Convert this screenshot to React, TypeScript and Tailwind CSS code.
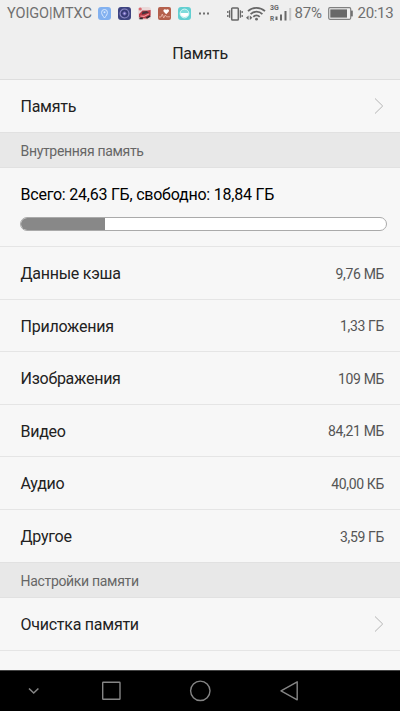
const categories = [
  { name: "Данные кэша", size: "9,76 МБ" },
  { name: "Приложения", size: "1,33 ГБ" },
  { name: "Изображения", size: "109 МБ" },
  { name: "Видео", size: "84,21 МБ" },
  { name: "Аудио", size: "40,00 КБ" },
  { name: "Другое", size: "3,59 ГБ" },
];

const USED_PERCENT = 23;

function NotificationIcons() {
  return (
    <div className="ml-[5.5px] flex items-center gap-[7px]">
      <svg width="13" height="13" viewBox="0 0 13 13">
        <rect width="13" height="13" rx="3" fill="#82b1f0" />
        <path d="M6.5 11C4.8 8.7 3.6 7.3 3.6 5.4a2.9 2.9 0 0 1 5.8 0C9.4 7.3 8.2 8.7 6.5 11Z" fill="none" stroke="#d9e9ff" strokeWidth="1" />
        <circle cx="6.5" cy="5.3" r="1" fill="#d9e9ff" />
      </svg>
      <svg width="13" height="13" viewBox="0 0 13 13">
        <rect width="13" height="13" rx="3" fill="#3d4380" />
        <circle cx="6.5" cy="6.5" r="4.5" fill="none" stroke="#8f8ac6" strokeWidth="1.1" />
        <circle cx="6.5" cy="6.5" r="2.7" fill="#625cae" stroke="#2b2f62" strokeWidth="1" />
        <circle cx="6.5" cy="6.5" r="1" fill="#bfb7e8" />
      </svg>
      <svg width="13" height="13" viewBox="0 0 13 13">
        <rect width="13" height="13" rx="3" fill="#ead9d9" />
        <circle cx="2.2" cy="2" r="1.6" fill="#dc6870" />
        <path d="M1 7 4.5 3.5h4.8L12.6 3v5.4L9.5 11.4H4L1 10Z" fill="#b93a46" />
        <path d="M4.4 4.8 8.8 4l2.2 1.8-7 1.7Z" fill="#4a333b" />
        <path d="m2.4 9 3.6.4 4.8-2.4" stroke="#f59a9e" strokeWidth="1.1" fill="none" />
        <path d="M1.4 11.4h3.4M8.4 11l3.8-2" stroke="#332b30" strokeWidth="1.8" />
      </svg>
      <svg width="13" height="13" viewBox="0 0 13 13">
        <rect width="13" height="13" rx="2" fill="#b4604c" />
        <path d="M8.2 7.2 5.8 4.8C4.4 3 6.8 1.2 8.2 2.8c1.4-1.6 3.8.2 2.4 2Z" fill="#fff" />
        <path d="M1 10h2l1.3-3 1.4 4 1.6-3 1.2 1.8H12" fill="none" stroke="#edbcae" strokeWidth=".8" />
      </svg>
      <svg width="13" height="13" viewBox="0 0 13 13">
        <rect width="13" height="13" rx="3" fill="#62cfd1" />
        <circle cx="6.5" cy="6.5" r="4.4" fill="#7edbdb" stroke="#d5f6f5" strokeWidth="1" />
        <path d="M2.4 6h8.2a4.1 4.1 0 0 1-8.2 0Z" fill="#fff" />
      </svg>
      <svg width="12" height="13" viewBox="0 0 12 13" fill="#707070">
        <rect x="1" y="5.5" width="2" height="2" />
        <rect x="5" y="5.5" width="2" height="2" />
        <rect x="9" y="5.5" width="2" height="2" />
      </svg>
    </div>
  );
}

function VibrateIcon() {
  return (
    <svg width="16" height="14" viewBox="0 0 16 14" fill="none" stroke="#686868">
      <rect x="4.7" y="1" width="6.6" height="12" rx=".8" strokeWidth="1.5" />
      <path d="M2.6 3.2v7.6M13.4 3.2v7.6M.8 4v2M.8 8v2M15.2 4v2M15.2 8v2" strokeWidth="1.3" />
    </svg>
  );
}

function WifiIcon() {
  return (
    <svg width="20" height="15" viewBox="0 0 20 15" fill="none" stroke="#686868">
      <path d="M2 5.2a12.4 12.4 0 0 1 17 0M4.6 8.1a8.5 8.5 0 0 1 11.8 0M7.3 10.8a4.6 4.6 0 0 1 6.4 0" strokeWidth="1.8" />
      <circle cx="10.5" cy="13.2" r="1.4" fill="#686868" stroke="none" />
      <path d="M2.6 9.5 0 11.7 2.6 14ZM3.8 9.5l2.6 2.2L3.8 14Z" fill="#686868" stroke="none" />
    </svg>
  );
}

function SignalIcon() {
  return (
    <div className="flex h-[19px] items-end">
      <div className="flex w-[9px] flex-col justify-between self-stretch text-[7px] leading-[8px] font-bold text-[#686868]">
        <span>3G</span>
        <span className="text-[6.5px] leading-[7px]">R</span>
      </div>
      <svg width="17" height="17" viewBox="0 0 17 17" className="-ml-[4px]" fill="#686868">
        <rect x="0.5" y="10.5" width="2" height="3.5" />
        <rect x="5" y="8.5" width="2" height="6" />
        <rect x="9.5" y="5" width="2" height="9.5" />
        <rect x="14.2" y="2" width="2" height="12.5" fill="#c9c9c9" />
      </svg>
    </div>
  );
}

function BatteryIcon() {
  return (
    <svg width="25" height="13" viewBox="0 0 25 13">
      <rect x=".7" y=".7" width="22" height="11.6" rx="1.2" fill="none" stroke="#808080" strokeWidth="1.2" />
      <rect x="2.3" y="2.4" width="16.7" height="8.2" fill="#686868" />
      <rect x="23" y="3.6" width="1.8" height="5.8" fill="#707070" />
    </svg>
  );
}

function StatusBar() {
  return (
    <div className="flex h-[27px] items-center pl-[7px] text-[15px] text-[#707070]">
      <span className="w-[85px] text-[14.5px] tracking-[-0.05px] whitespace-nowrap">YOIGO|MTXC</span>
      <NotificationIcons />
      <div className="ml-auto flex items-center pr-[6px]">
        <VibrateIcon />
        <div className="ml-[3px]"><WifiIcon /></div>
        <div className="ml-[4px]"><SignalIcon /></div>
        <span className="ml-[2.5px] w-[29px] tracking-[-0.2px]">87%</span>
        <div className="ml-[4px]"><BatteryIcon /></div>
        <span className="ml-[5px] w-[36.5px] tracking-[-0.3px]">20:13</span>
      </div>
    </div>
  );
}

function LinkRow({ label }: { label: string }) {
  return (
    <div className="flex h-[52px] items-center justify-between pr-[16px] pl-[20.5px]">
      <span className="pt-[2px] text-[16px] tracking-[-0.25px]">{label}</span>
      <svg width="10" height="18" viewBox="0 0 10 18" fill="none" stroke="#b5b5b5" strokeWidth="1">
        <path d="m1 1.5 7.7 7.5L1 16.5" />
      </svg>
    </div>
  );
}

function SectionTitle({ title }: { title: string }) {
  return (
    <div className="flex h-[36px] items-center border-y border-[#e1e1e1] bg-[#e8e8e8] pt-[2px] pl-[20.5px] text-[14px] tracking-[-0.32px] text-[#666]">
      {title}
    </div>
  );
}

function StorageSummary() {
  return (
    <div className="h-[79px] border-b border-[#e5e5e5] pt-[15px] pr-[13px] pl-[20px]">
      <div className="pl-[0.5px] text-[16px] leading-6 tracking-[-0.23px] text-black">Всего: 24,63 ГБ, свободно: 18,84 ГБ</div>
      <div className="mt-[10px] h-[14px] overflow-hidden rounded-full border border-[#aaa] bg-white">
        <div className="h-full bg-[#888]" style={{ width: `${USED_PERCENT}%` }} />
      </div>
    </div>
  );
}

function NavBar() {
  return (
    <div className="h-[41px] border-t border-[#444] bg-black">
      <svg width="400" height="40" viewBox="0 0 400 40" fill="none" stroke="#858585" strokeWidth="1.4">
        <path d="m29 17.5 4.7 4.5 4.7-4.5" strokeWidth="1.6" />
        <rect x="102.7" y="11.2" width="17.3" height="17" rx=".5" />
        <circle cx="200.3" cy="19.8" r="9.7" />
        <path d="M297.2 10.8v18L281 19.8Z" strokeLinejoin="round" />
      </svg>
    </div>
  );
}

export default function App() {
  return (
    <div className="flex h-[711px] w-[400px] flex-col overflow-hidden bg-[#f7f7f7] font-[Roboto,sans-serif] text-[#222]">
      <header className="h-[80px] border-b border-[#dedede] bg-[#efefef]">
        <StatusBar />
        <h1 className="flex h-[53px] items-center justify-center text-[16px] tracking-[-0.25px]">Память</h1>
      </header>
      <main className="flex-1">
        <LinkRow label="Память" />
        <SectionTitle title="Внутренняя память" />
        <StorageSummary />
        <div className="divide-y divide-[#e5e5e5]">
          {categories.map((category) => (
            <div key={category.name} className="flex h-[52.5px] items-center justify-between pt-[3px] pr-[16px] pl-[20.5px]">
              <span className="text-[16px] tracking-[-0.25px]">{category.name}</span>
              <span className="text-[14px] tracking-[-0.35px] text-[#555]">{category.size}</span>
            </div>
          ))}
        </div>
        <SectionTitle title="Настройки памяти" />
        <LinkRow label="Очистка памяти" />
        <div className="border-t border-[#e5e5e5]" />
      </main>
      <NavBar />
    </div>
  );
}
